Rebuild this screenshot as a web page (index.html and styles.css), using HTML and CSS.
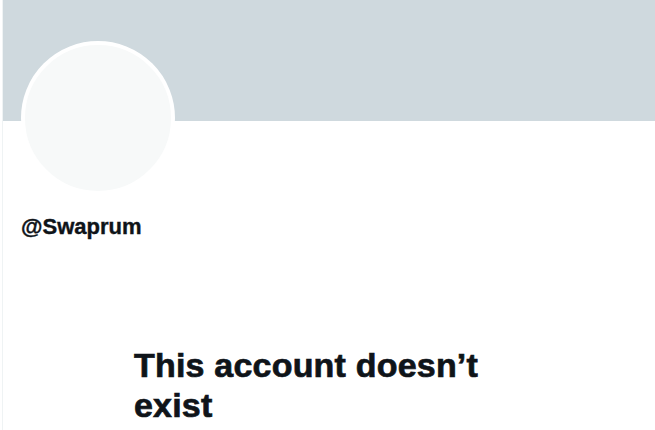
FILE: index.html
```html
<!DOCTYPE html>
<html lang="en">
<head>
  <meta charset="UTF-8" />
  <meta name="viewport" content="width=device-width, initial-scale=1.0" />
  <title>@Swaprum</title>
  <link rel="stylesheet" href="styles.css">
</head>
<body>
  <main class="column">
    <!-- Banner -->
    <div class="banner"></div>

    <!-- Profile header -->
    <div class="profile">
      <div class="avatar"></div>
      <div class="handle">@Swaprum</div>
    </div>

    <!-- Empty state -->
    <div class="empty">
      <h2>This account doesn’t exist</h2>
    </div>
  </main>
</body>
</html>
```
FILE: styles.css
```css
* {
  box-sizing: border-box;
}

body {
  margin: 0;
  padding: 0;
  background: #fff;
  color: #0f1419;
  font-family: "Liberation Sans", Arial, sans-serif;
  height: 430px;
  overflow: hidden;
}

.column {
  margin-left: 2px;
  border-left: 1px solid #eff3f4;
  min-height: 430px;
}

.banner {
  height: 121px;
  background: #cfd9de;
}

.profile {
  padding-left: 18px;
}

.avatar {
  width: 154px;
  height: 154px;
  margin-top: -80px;
  border-radius: 50%;
  border: 4px solid #fff;
  background: #f7f9f9;
}

.handle {
  margin-top: 19px;
  font-size: 22px;
  line-height: 26px;
  font-weight: bold;
  -webkit-text-stroke: 0.4px #0f1419;
}

.empty {
  padding: 106px 0 0 131px;
}

.empty h2 {
  margin: 0;
  max-width: 370px;
  font-size: 34px;
  line-height: 39.6px;
  font-weight: bold;
  letter-spacing: 0.2px;
  -webkit-text-stroke: 0.7px #0f1419;
}
```
